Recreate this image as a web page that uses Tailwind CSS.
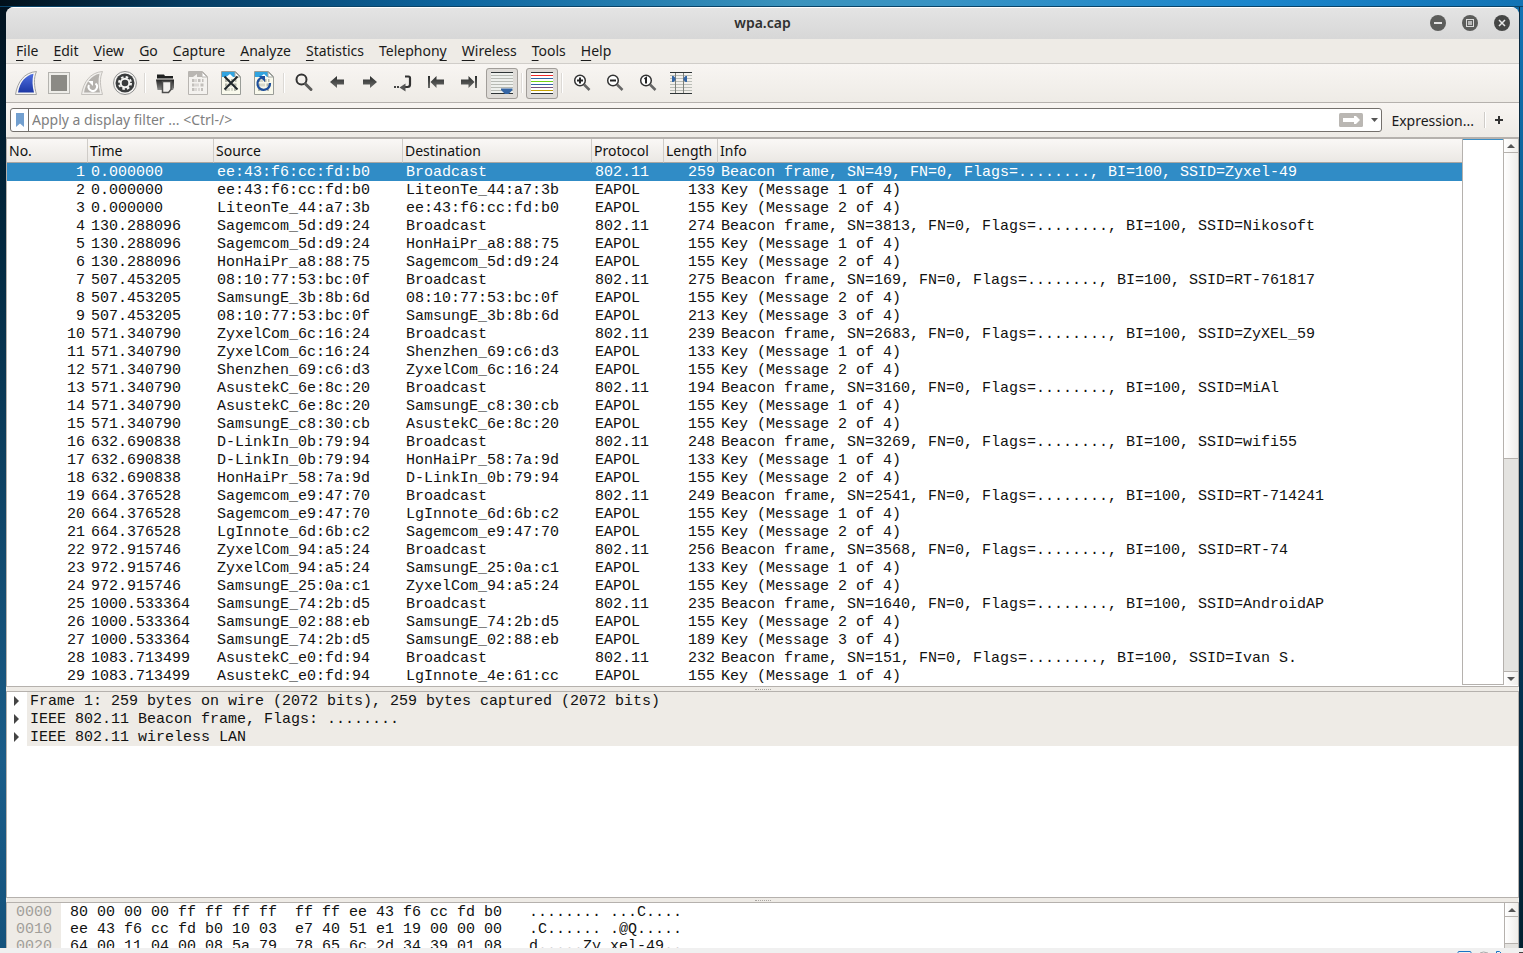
<!DOCTYPE html>
<html lang="en">
<head>
<meta charset="utf-8">
<title>wpa.cap</title>
<script src="https://cdn.jsdelivr.net/npm/@tailwindcss/browser@4"></script>
</head>
<body class="h-screen overflow-hidden flex flex-col bg-gradient-to-r from-[#01121f] to-[#0f6aa5] font-['Noto_Sans',sans-serif] text-[14px] text-[#1a1a1a]">
<svg class="absolute size-0" aria-hidden="true">
  <defs>
    <linearGradient id="dark" x1="0" y1="0" x2="0" y2="1"><stop offset="0" stop-color="#2a2c2c"/><stop offset="1" stop-color="#6c6c6a"/></linearGradient>
    <linearGradient id="fin" x1="0" y1="0" x2="0" y2="1"><stop offset="0" stop-color="#4f6fe0"/><stop offset="1" stop-color="#1c37a4"/></linearGradient>
    <linearGradient id="fold" x1="0" y1="0" x2="0" y2="1"><stop offset="0" stop-color="#222"/><stop offset="1" stop-color="#8a8a88"/></linearGradient>
    <g id="bits" fill="none" stroke-width="3">
      <path d="M10 12.500h2.500M13.500 12.500h1M16 12.500h2.500M20 12.500h1.500M10 17h2.500M13.500 17h1M15.500 17h1M18.500 17h3M10 21.500h2.500M13.500 21.500h1M16.500 21.500h1M19 21.500h2"/>
    </g>
  </defs>
</svg>

<div class="h-[7px] shrink-0 border-b border-[#0a4468] bg-[linear-gradient(90deg,#01101a_0%,#063c62_12%,#0d66a0_30%,#3b93bd_52%,#3893c4_62%,#1b86cc_82%,#1273b4_100%)]"></div>

<div class="flex-1 min-h-0 flex">
  <div class="w-[6px] shrink-0 bg-[linear-gradient(180deg,#01121f_0%,#02283f_25%,#124b70_60%,#1a5c88_80%,#14527c_100%)]"></div>

  <main class="flex-1 min-w-0 flex flex-col rounded-t-lg bg-[#eeebe6] overflow-hidden">
    <header class="h-8 shrink-0 flex items-center pb-0.5 border-t border-white bg-gradient-to-b from-[#e4e4e4] to-[#d7d7d7]">
      <h1 class="flex-1 pl-[89px] text-center font-semibold text-[14px] text-[#303030]">wpa.cap</h1>
      <div class="flex gap-4 pr-[9px]">
        <button aria-label="Minimize" class="size-4"><svg class="size-4" viewBox="0 0 16 16"><circle cx="8" cy="8" r="8" fill="#5c5d5b"/><path d="M4 8h8" stroke="#e4e4e4" stroke-width="2"/></svg></button>
        <button aria-label="Maximize" class="size-4"><svg class="size-4" viewBox="0 0 16 16"><circle cx="8" cy="8" r="8" fill="#5c5d5b"/><rect x="4.500" y="4.500" width="7" height="7" fill="none" stroke="#dcdcdc"/><rect x="6" y="6" width="4" height="4" fill="#b9b9b9"/></svg></button>
        <button aria-label="Close" class="size-4"><svg class="size-4" viewBox="0 0 16 16"><circle cx="8" cy="8" r="8" fill="#464746"/><path d="M5 5l6 6M11 5l-6 6" stroke="#e8e8e8" stroke-width="1.500"/></svg></button>
      </div>
    </header>

    <nav class="h-[25px] shrink-0 flex items-center gap-[15px] pl-[10px] pb-0.5 border-b border-[#d0cdc9] underline-offset-4">
      <button><u>F</u>ile</button><button><u>E</u>dit</button><button><u>V</u>iew</button><button><u>G</u>o</button><button><u>C</u>apture</button><button><u>A</u>nalyze</button><button><u>S</u>tatistics</button><button>Telephon<u>y</u></button><button><u>W</u>ireless</button><button><u>T</u>ools</button><button><u>H</u>elp</button>
    </nav>

    <div role="toolbar" class="h-[39px] shrink-0 flex items-center gap-px pl-1 border-b border-[#b5b1ad] bg-gradient-to-b from-[#f8f5f2] to-[#eeebe6]">
      <button aria-label="Start capture"><svg class="w-8 h-[31px]" viewBox="0 0 32 31"><path d="M5.500 26.500C7.500 14 14 4.500 26.500 3.500C23.500 10 24 18 26.500 26.500Z" fill="#f6f5f3" stroke="#a3a3a3"/><path d="M8 24.500C10 14 15.500 7.500 23.500 5.800C22 12 22.300 18 24 24.500Z" fill="url(#fin)"/></svg></button>
      <button aria-label="Stop capture"><svg class="w-8 h-[31px]" viewBox="0 0 32 31"><rect x="5.500" y="4.500" width="21" height="21" fill="#eeede9" stroke="#b4b3af"/><rect x="8" y="7" width="16" height="16" fill="#8b8a85"/></svg></button>
      <button aria-label="Restart capture"><svg class="w-8 h-[31px]" viewBox="0 0 32 31"><path d="M5.500 26.500C7.500 14 14 4.500 26.500 3.500C23.500 10 24 18 26.500 26.500Z" fill="#f1efec" stroke="#c4c1bd"/><path d="M8 24.500C10 14 15.500 7.500 23.500 5.800C22 12 22.300 18 24 24.500Z" fill="#b4b1ad"/><path d="M19.500 15.500A4.200 4.200 0 1 1 13 17" fill="none" stroke="#fff" stroke-width="2"/><path d="M12 13l5 0l0 5z" fill="#fff"/></svg></button>
      <button aria-label="Capture options"><svg class="w-8 h-[31px]" viewBox="0 0 32 31"><circle cx="16" cy="15" r="11.500" fill="#f5f4f2" stroke="#909090"/><circle cx="16" cy="15" r="9.500" fill="#3a3c3d"/><circle cx="16" cy="15" r="6" fill="none" stroke="#f4f4f2" stroke-width="2" stroke-dasharray="2.500 2.210"/><circle cx="16" cy="15" r="4.300" fill="none" stroke="#f4f4f2" stroke-width="2"/></svg></button>
      <span class="w-[6px] h-5 flex justify-center"><i class="w-[2px] border-l border-[#dcd9d5] bg-white"></i></span>
      <button aria-label="Open file"><svg class="w-8 h-[31px]" viewBox="0 0 32 31"><path d="M8 6.500h7l1 1.500h8v2.500H8z" fill="#1f2020"/><path d="M7 11.500H25v8l-1 2.500H8.500z" fill="url(#fold)"/><path d="M13.500 13.500h8.500v8l-2.500 3h-6z" fill="#f3f1ee" stroke="#4e4e4d" stroke-width="1.500"/></svg></button>
      <button aria-label="Save file"><svg class="w-8 h-[31px]" viewBox="0 0 32 31"><path d="M6.500 3.500h14l5 5v18h-19z" fill="#f4f2ef" stroke="#b8b5b1"/><path d="M7 4h13v5h-5v-3l-4 3H7z" fill="#b9b6b2"/><path d="M20 4l5 5h-5z" fill="#fff" stroke="#b8b5b1"/><use href="#bits" stroke="#c2bfbb"/></svg></button>
      <button aria-label="Close file"><svg class="w-8 h-[31px]" viewBox="0 0 32 31"><path d="M6.500 3.500h14l5 5v18h-19z" fill="#f9f9ec" stroke="#9a9d98"/><path d="M7 4h13v5H7z" fill="#31a4e0"/><path d="M11 9l4-3 3 3z" fill="#fff"/><path d="M20 4l5 5h-5z" fill="#fff" stroke="#a0a49e"/><use href="#bits" stroke="#b5b8ac"/><path d="M9.500 8.500l13 13M22.500 8.500l-13 13" stroke="#20282c" stroke-width="2"/></svg></button>
      <button aria-label="Reload file"><svg class="w-8 h-[31px]" viewBox="0 0 32 31"><path d="M6.500 3.500h14l5 5v18h-19z" fill="#f9f9ec" stroke="#9a9d98"/><path d="M7 4h13v5H7z" fill="#31a4e0"/><path d="M12 9l4-3 3 3z" fill="#fff"/><path d="M20 4l5 5h-5z" fill="#fff" stroke="#a0a49e"/><use href="#bits" stroke="#b5b8ac"/><path d="M14 9.500A6.300 6.300 0 1 0 22 15" fill="none" stroke="#1e4f9c" stroke-width="2.200"/><path d="M11 8h6v6z" fill="#1e4f9c"/></svg></button>
      <span class="w-[6px] h-5 flex justify-center"><i class="w-[2px] border-l border-[#dcd9d5] bg-white"></i></span>
      <button aria-label="Find packet"><svg class="w-8 h-[31px]" viewBox="0 0 32 31"><circle cx="13.500" cy="11.500" r="5" fill="none" stroke="#333" stroke-width="2"/><path d="M17.500 16l5.500 5.500" stroke="#5c5c5a" stroke-width="3" stroke-linecap="round"/></svg></button>
      <button aria-label="Previous packet"><svg class="w-8 h-[31px]" viewBox="0 0 32 31"><path d="M9 14l7-6v3.500h7v5h-7v3.500z" fill="url(#dark)"/></svg></button>
      <button aria-label="Next packet"><svg class="w-8 h-[31px]" viewBox="0 0 32 31"><path d="M23 14l-7-6v3.500H9v5h7v3.500z" fill="url(#dark)"/></svg></button>
      <button aria-label="Go to packet"><svg class="w-8 h-[31px]" viewBox="0 0 32 31"><path d="M18 8.500h3.500q1.500 0 1.500 1.500v6.500q0 2.500-2.500 2.500H17" fill="none" stroke="#333" stroke-width="2.200"/><path d="M12.500 19.500l6-4v8z" fill="#555"/><path d="M7 18h2v2H7zM10 18h2v2h-2z" fill="#444"/></svg></button>
      <button aria-label="First packet"><svg class="w-8 h-[31px]" viewBox="0 0 32 31"><path d="M8 8h2v12H8zM10.500 14l6-6v3.500H24v5h-7.500V20z" fill="url(#dark)"/></svg></button>
      <button aria-label="Last packet"><svg class="w-8 h-[31px]" viewBox="0 0 32 31"><path d="M24 8h-2v12h2zM21.500 14l-6-6v3.500H8v5h7.500V20z" fill="url(#dark)"/></svg></button>
      <button aria-label="Auto scroll" aria-pressed="true" class="rounded-[3px] bg-[#dedbd7] outline outline-[#a19d99] -outline-offset-1"><svg class="w-8 h-[31px]" viewBox="0 0 32 31"><path d="M5 4h22v22H5z" fill="#eef0ed"/><path d="M5 7.500h22M5 10.500h22M5 13.500h22M5 16.500h22M5 19.500h22M5 22.500h22" stroke="#b7bab4"/><path d="M5 4.500h22M5 25.500h22" stroke="#2e3436"/><path d="M15 20.500h11.500v1.500l-4 4h-3.500l-4-4z" fill="#3465a4"/></svg></button>
      <span class="w-[6px] h-5 flex justify-center"><i class="w-[2px] border-l border-[#dcd9d5] bg-white"></i></span>
      <button aria-label="Colorize packets" aria-pressed="true" class="rounded-[3px] bg-[#dedbd7] outline outline-[#a19d99] -outline-offset-1"><svg class="w-8 h-[31px]" viewBox="0 0 32 31"><path d="M5 4h22v22H5z" fill="#fff"/><path d="M5 4.500h22M5 25.500h22" stroke="#2e3436"/><path d="M5 7.500h22" stroke="#ef2929"/><path d="M5 10.500h22M5 16.500h22" stroke="#3465a4"/><path d="M5 13.500h22" stroke="#73d216"/><path d="M5 19.500h22" stroke="#75507b"/><path d="M5 22.500h22" stroke="#c4a000"/></svg></button>
      <span class="w-[6px] h-5 flex justify-center"><i class="w-[2px] border-l border-[#dcd9d5] bg-white"></i></span>
      <button aria-label="Zoom in"><svg class="w-8 h-[31px]" viewBox="0 0 32 31"><circle cx="14" cy="12.500" r="5.300" fill="#fff" stroke="#333" stroke-width="1.500"/><path d="M18 16.500l5.500 5.500" stroke="#666" stroke-width="2.500"/><path d="M11 12.500h6M14 9.500v6" stroke="#222" stroke-width="2"/></svg></button>
      <button aria-label="Zoom out"><svg class="w-8 h-[31px]" viewBox="0 0 32 31"><circle cx="14" cy="12.500" r="5.300" fill="#fff" stroke="#333" stroke-width="1.500"/><path d="M18 16.500l5.500 5.500" stroke="#666" stroke-width="2.500"/><path d="M11 12.500h6" stroke="#222" stroke-width="2"/></svg></button>
      <button aria-label="Normal size"><svg class="w-8 h-[31px]" viewBox="0 0 32 31"><circle cx="14" cy="12.500" r="5.300" fill="#fff" stroke="#333" stroke-width="1.500"/><path d="M18 16.500l5.500 5.500" stroke="#666" stroke-width="2.500"/><path d="M12.500 11l1.500-1v5.500" fill="none" stroke="#222" stroke-width="2"/></svg></button>
      <button aria-label="Resize columns"><svg class="w-8 h-[31px]" viewBox="0 0 32 31"><path d="M5 7.500h22M5 10.500h22M5 13.500h22M5 16.500h22M5 19.500h22M5 22.500h22" stroke="#babdb6"/><path d="M5 4.500h22M5 25.500h22" stroke="#2e3436"/><path d="M10.500 5v20M18.500 5v20" stroke="#7d7f7a"/><path d="M7 8v6h1.500l2-2v-2l-2-2zM22 8v6h-1.500l-2-2v-2l2-2z" fill="#3465a4"/></svg></button>
    </div>

    <form class="h-[34px] shrink-0 flex items-center pl-1 pr-[15px] bg-gradient-to-b from-[#f8f5f2] to-[#eeebe6]" onsubmit="return false">
      <div class="flex-1 h-6 flex items-center rounded-[3px] border border-[#74706c] bg-white">
        <button type="button" aria-label="Bookmark filter" class="w-[18px] h-full flex items-center justify-center border-r border-[#74706c]"><svg class="w-2 h-[14px]" viewBox="0 0 8 14"><path d="M0 0h8v14l-4-3.500L0 14z" fill="#729fcf"/></svg></button>
        <input aria-label="Display filter" placeholder="Apply a display filter ... &lt;Ctrl-/&gt;" class="flex-1 min-w-0 pl-[3px] pb-0.5 outline-none placeholder:text-[#7f7f7f]">
        <button type="button" aria-label="Apply filter"><svg class="w-6 h-[14px]" viewBox="0 0 24 14"><rect width="24" height="14" rx="1.500" fill="#bab7b3"/><path d="M4 5h11V3h2l4 4-4 4h-2V9H4z" fill="#fff"/></svg></button>
        <button type="button" aria-label="Recent filters" class="w-[18px] flex justify-center pl-1"><svg class="w-[7px] h-1" viewBox="0 0 7 4"><path d="M0 0h7L3.500 4z" fill="#555"/></svg></button>
      </div>
      <button type="button" class="ml-[9px]">Expression...</button>
      <i class="ml-[10px] mr-[8px] w-[2px] h-4 border-l border-[#cfccc8] bg-white"></i>
      <button type="button" aria-label="Add filter button"><svg class="size-[10px]" viewBox="0 0 10 10"><path d="M1 5h8M5 1v8" stroke="#333" stroke-width="2"/></svg></button>
    </form>

    <section class="shrink-0 flex pb-px border-t-2 border-b border-l border-r border-[#b5b1ad] bg-white">
      <table class="flex-1 w-0 table-fixed border-separate border-spacing-0 font-['Liberation_Mono',monospace] text-[15px] leading-[16px] text-[#111]">
        <colgroup><col class="w-[81px]"><col class="w-[126px]"><col class="w-[189px]"><col class="w-[189px]"><col class="w-[72px]"><col class="w-[54px]"><col></colgroup>
        <thead class="font-['Noto_Sans',sans-serif] text-[14px] bg-gradient-to-b from-[#faf8f6] to-[#eae7e3]">
          <tr class="h-6 text-left">
            <th scope="col" class="p-0 pl-[2px] font-normal border-b border-r border-b-[#a9a6a2] border-r-[#cfccc8]">No.</th><th scope="col" class="p-0 pl-[2px] font-normal border-b border-r border-b-[#a9a6a2] border-r-[#cfccc8]">Time</th><th scope="col" class="p-0 pl-[2px] font-normal border-b border-r border-b-[#a9a6a2] border-r-[#cfccc8]">Source</th><th scope="col" class="p-0 pl-[2px] font-normal border-b border-r border-b-[#a9a6a2] border-r-[#cfccc8]">Destination</th><th scope="col" class="p-0 pl-[2px] font-normal border-b border-r border-b-[#a9a6a2] border-r-[#cfccc8]">Protocol</th><th scope="col" class="p-0 pl-[2px] font-normal border-b border-r border-b-[#a9a6a2] border-r-[#cfccc8]">Length</th><th scope="col" class="p-0 pl-[2px] font-normal border-b border-b-[#a9a6a2]">Info</th>
          </tr>
        </thead>
        <tbody id="packets"></tbody>
      </table>
      <div class="w-[42px] border-x border-b border-[#b5b1ad]"><div class="h-px bg-[#3b8ec4]"></div></div>
      <div class="w-[14px] flex flex-col bg-[#e4e3e0]">
        <button aria-label="Scroll up" class="h-[14px] flex items-center justify-center border-b border-[#b5b1ad] bg-gradient-to-r from-white to-[#efedea]"><svg class="w-2 h-1" viewBox="0 0 8 4"><path d="M0 4h8L4 0z" fill="#555"/></svg></button>
        <div class="grow-[306] border-b border-[#b5b1ad] bg-gradient-to-r from-white to-[#efedea]"></div>
        <div class="grow-[213]"></div>
        <button aria-label="Scroll down" class="h-[14px] flex items-center justify-center border-t border-[#b5b1ad] bg-gradient-to-r from-white to-[#efedea]"><svg class="w-2 h-1" viewBox="0 0 8 4"><path d="M0 0h8L4 4z" fill="#555"/></svg></button>
      </div>
    </section>

    <div class="h-1 shrink-0 flex items-center justify-center"><i class="w-4 border-t border-dotted border-[#a9a6a2]"></i></div>

    <section class="flex-1 min-h-0 border border-[#b5b1ad] bg-white font-['Liberation_Mono',monospace] text-[15px] leading-[16px] text-[#111]">
      <ul>
        <li class="flex"><button aria-label="Expand frame" class="w-5 flex items-center pl-[7px]"><svg class="w-[5px] h-[10px]" viewBox="0 0 5 10"><path d="M0 0l5 5-5 5z" fill="#444"/></svg></button><span class="flex-1 pt-[2px] pl-[3px] bg-[#eeebe6] whitespace-pre">Frame 1: 259 bytes on wire (2072 bits), 259 bytes captured (2072 bits)</span></li>
        <li class="flex"><button aria-label="Expand beacon frame" class="w-5 flex items-center pl-[7px]"><svg class="w-[5px] h-[10px]" viewBox="0 0 5 10"><path d="M0 0l5 5-5 5z" fill="#444"/></svg></button><span class="flex-1 pt-[2px] pl-[3px] bg-[#eeebe6] whitespace-pre">IEEE 802.11 Beacon frame, Flags: ........</span></li>
        <li class="flex"><button aria-label="Expand wireless LAN" class="w-5 flex items-center pl-[7px]"><svg class="w-[5px] h-[10px]" viewBox="0 0 5 10"><path d="M0 0l5 5-5 5z" fill="#444"/></svg></button><span class="flex-1 pt-[2px] pl-[3px] bg-[#eeebe6] whitespace-pre">IEEE 802.11 wireless LAN</span></li>
      </ul>
    </section>

    <div class="h-1 shrink-0 flex items-center justify-center"><i class="w-4 border-t border-dotted border-[#a9a6a2]"></i></div>

    <section class="h-[46px] shrink-0 flex overflow-hidden border-t border-x border-[#b5b1ad] bg-white font-['Liberation_Mono',monospace] text-[15px] leading-[17px] text-[#111]">
      <pre class="font-[inherit] w-[54px] pl-[9px] pt-px bg-[#eeebe6] text-[#a19e9a]">0000
0010
0020</pre>
      <pre class="font-[inherit] flex-1 pl-[9px] pt-px">80 00 00 00 ff ff ff ff  ff ff ee 43 f6 cc fd b0   ........ ...C....
ee 43 f6 cc fd b0 10 03  e7 40 51 e1 19 00 00 00   .C...... .@Q.....
64 00 11 04 00 08 5a 79  78 65 6c 2d 34 39 01 08   d.....Zy xel-49..</pre>
      <div class="w-[14px] flex flex-col border-l border-[#b5b1ad] bg-[#e4e3e0]">
        <button aria-label="Scroll bytes up" class="h-[14px] flex items-center justify-center border-b border-[#b5b1ad] bg-gradient-to-r from-white to-[#efedea]"><svg class="w-2 h-1" viewBox="0 0 8 4"><path d="M0 4h8L4 0z" fill="#555"/></svg></button>
        <div class="h-[27px] border-b border-[#b5b1ad] bg-gradient-to-r from-white to-[#efedea]"></div>
      </div>
    </section>
  </main>

  <div class="w-1 shrink-0 border-l border-[#0a2a40] bg-[linear-gradient(180deg,#1273b4_0%,#0e6298_20%,#063c62_50%,#02304e_75%,#02202f_100%)]"></div>
</div>

<footer class="h-[5px] shrink-0 flex items-end justify-end bg-[#f0f0f0]">
  <svg class="w-[66px] h-[2px]" viewBox="0 0 66 2"><path d="M1 2V1.500Q1 .500 2 .500H13Q14 .500 14 1.500V2" fill="none" stroke="#1a73c4"/><path d="M23 2Q26 0 31 2" fill="none" stroke="#aaa"/><path d="M39.500 2V.500h3l1.500 1.500" fill="none" stroke="#1a73c4"/><path d="M62 1h4v1h-4z" fill="#444"/></svg>
</footer>

<script>
const packets = `0.000000|ee:43:f6:cc:fd:b0|Broadcast|802.11|259|49,Zyxel-49
0.000000|ee:43:f6:cc:fd:b0|LiteonTe_44:a7:3b|EAPOL|133|1
0.000000|LiteonTe_44:a7:3b|ee:43:f6:cc:fd:b0|EAPOL|155|2
130.288096|Sagemcom_5d:d9:24|Broadcast|802.11|274|3813,Nikosoft
130.288096|Sagemcom_5d:d9:24|HonHaiPr_a8:88:75|EAPOL|155|1
130.288096|HonHaiPr_a8:88:75|Sagemcom_5d:d9:24|EAPOL|155|2
507.453205|08:10:77:53:bc:0f|Broadcast|802.11|275|169,RT-761817
507.453205|SamsungE_3b:8b:6d|08:10:77:53:bc:0f|EAPOL|155|2
507.453205|08:10:77:53:bc:0f|SamsungE_3b:8b:6d|EAPOL|213|3
571.340790|ZyxelCom_6c:16:24|Broadcast|802.11|239|2683,ZyXEL_59
571.340790|ZyxelCom_6c:16:24|Shenzhen_69:c6:d3|EAPOL|133|1
571.340790|Shenzhen_69:c6:d3|ZyxelCom_6c:16:24|EAPOL|155|2
571.340790|AsustekC_6e:8c:20|Broadcast|802.11|194|3160,MiAl
571.340790|AsustekC_6e:8c:20|SamsungE_c8:30:cb|EAPOL|155|1
571.340790|SamsungE_c8:30:cb|AsustekC_6e:8c:20|EAPOL|155|2
632.690838|D-LinkIn_0b:79:94|Broadcast|802.11|248|3269,wifi55
632.690838|D-LinkIn_0b:79:94|HonHaiPr_58:7a:9d|EAPOL|133|1
632.690838|HonHaiPr_58:7a:9d|D-LinkIn_0b:79:94|EAPOL|155|2
664.376528|Sagemcom_e9:47:70|Broadcast|802.11|249|2541,RT-714241
664.376528|Sagemcom_e9:47:70|LgInnote_6d:6b:c2|EAPOL|155|1
664.376528|LgInnote_6d:6b:c2|Sagemcom_e9:47:70|EAPOL|155|2
972.915746|ZyxelCom_94:a5:24|Broadcast|802.11|256|3568,RT-74
972.915746|ZyxelCom_94:a5:24|SamsungE_25:0a:c1|EAPOL|133|1
972.915746|SamsungE_25:0a:c1|ZyxelCom_94:a5:24|EAPOL|155|2
1000.533364|SamsungE_74:2b:d5|Broadcast|802.11|235|1640,AndroidAP
1000.533364|SamsungE_02:88:eb|SamsungE_74:2b:d5|EAPOL|155|2
1000.533364|SamsungE_74:2b:d5|SamsungE_02:88:eb|EAPOL|189|3
1083.713499|AsustekC_e0:fd:94|Broadcast|802.11|232|151,Ivan S.
1083.713499|AsustekC_e0:fd:94|LgInnote_4e:61:cc|EAPOL|155|1`.split('\n');

document.getElementById('packets').innerHTML = packets.map((line, i) => {
  const [time, src, dst, proto, len, x] = line.split('|');
  const [sn, ssid] = x.split(',');
  const info = ssid
    ? `Beacon frame, SN=${sn}, FN=0, Flags=........, BI=100, SSID=${ssid}`
    : `Key (Message ${sn} of 4)`;
  const row = i === 0 ? 'bg-[#308cc6] text-white' : '';
  return `<tr class="${row}"><td class="p-0 pt-[2px] pr-[3px] text-right">${i + 1}</td>` +
    [time, src, dst, proto].map(v => `<td class="p-0 pt-[2px] pl-[3px] whitespace-nowrap">${v}</td>`).join('') +
    `<td class="p-0 pt-[2px] pr-[3px] text-right">${len}</td><td class="p-0 pt-[2px] pl-[3px] whitespace-nowrap">${info}</td></tr>`;
}).join('');
</script>
</body>
</html>
